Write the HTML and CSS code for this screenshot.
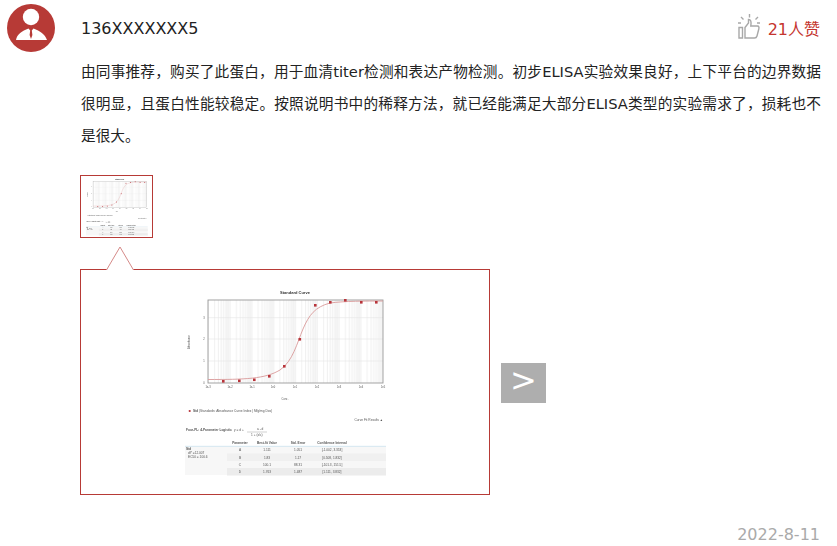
FILE: index.html
```html
<!DOCTYPE html>
<html>
<head>
    <title>136XXXXXXX5</title>
    <link rel="stylesheet" href="styles.css">
</head>
<body>
    <div class="comment">
        <svg class="avatar" viewBox="0 0 48 48" width="48" height="48">
            <circle cx="24" cy="24" r="24" fill="#b73a36"/>
            <circle cx="24" cy="13" r="8.2" fill="#fff"/>
            <path d="M9 36C10 30 15 27 21.5 24.5L23.2 26.5L22.6 31L24 35L25.4 31L24.8 26.5L26.5 24.5C33 27 38 30 40 36Z" fill="#fff"/>
        </svg>
        <div class="comment-main">
            <div class="comment-head">
                <span class="user-name">136XXXXXXX5</span>
                <span class="likes">
                    <svg class="like-icon" viewBox="0 0 24 26" width="24" height="26">
                        <g fill="none" stroke="#a8a8a8" stroke-width="1.4">
                            <path d="M12.5 0V3.5M4 3L6.5 5.5M21 3L18.5 5.5M1 9H4M20 9H23"/>
                            <path d="M8 13.5L11.5 9V5.5C13.8 5.5 14.5 7.5 13.8 12H20.5C22 12 22.2 13.5 21.8 15L20 22C19.7 23.2 19 24 17.5 24H8Z"/>
                            <path d="M2 13.5H5.5V24H2Z"/>
                        </g>
                    </svg>
                    <span class="like-count">21人赞</span>
                </span>
            </div>
            <p class="comment-text">由同事推荐，购买了此蛋白，用于血清titer检测和表达产物检测。初步ELISA实验效果良好，上下平台的边界数据很明显，且蛋白性能较稳定。按照说明书中的稀释方法，就已经能满足大部分ELISA类型的实验需求了，损耗也不是很大。</p>

            <div class="thumb">
                <svg viewBox="0 0 202 195" width="62" height="60"><use href="#curve"/></svg>
            </div>

            <div class="viewer">
                <div class="viewer-box">
                    <svg class="pointer" viewBox="0 0 29 25" width="29" height="25">
                        <path d="M0.5 24L14 1L27.5 24" fill="#fff" stroke="#d58a88"/>
                    </svg>
                    <svg class="viewer-img" viewBox="0 0 202 195" width="202" height="195">
                        <defs>
                            <pattern id="logGrid" x="23" y="0" width="21.8" height="200" patternUnits="userSpaceOnUse">
                                <path d="M.3 0V200M6.6 0V200M10.4 0V200M13.1 0V200M15.2 0V200M17 0V200M18.5 0V200M19.8 0V200M20.9 0V200" stroke="#d8d8d8" stroke-width=".4"/>
                            </pattern>
                        </defs>
                        <g id="curve">
                            <text class="t-title" x="110" y="9" text-anchor="middle">Standard Curve</text>
                            <rect x="23" y="15" width="175" height="83" fill="url(#logGrid)"/>
                            <path d="M23 32.7H198M23 54H198M23 76H198" stroke="#e4e4e4" stroke-width=".6"/>
                            <rect x="23" y="15" width="175" height="83" fill="none" stroke="#999" stroke-width=".9"/>
                            <path d="M23 94.5C60 94.5 80 94 95 85C108 76 112 58 118 44C124 30 130 22 145 18C160 16 180 16 198 16" fill="none" stroke="#d99a9a" stroke-width=".9"/>
                            <g fill="#b8343a">
                                <rect x="37" y="95" width="2.6" height="2.6"/><rect x="53" y="94.5" width="2.6" height="2.6"/>
                                <rect x="68" y="93.5" width="2.6" height="2.6"/><rect x="83" y="90" width="2.6" height="2.6"/>
                                <rect x="98" y="80" width="2.6" height="2.6"/><rect x="113.5" y="53" width="2.6" height="2.6"/>
                                <rect x="129" y="19" width="2.6" height="2.6"/><rect x="144" y="16" width="2.6" height="2.6"/>
                                <rect x="159" y="14" width="2.6" height="2.6"/><rect x="175" y="16" width="2.6" height="2.6"/>
                                <rect x="190" y="16" width="2.6" height="2.6"/>
                            </g>
                            <g class="t-tiny" text-anchor="middle">
                                <text x="19" y="34">3</text><text x="19" y="55">2</text><text x="19" y="77">1</text><text x="19" y="99">0</text>
                                <text x="23" y="103">1e-3</text><text x="45" y="103">1e-2</text><text x="67" y="103">1e-1</text>
                                <text x="88" y="103">1e0</text><text x="110" y="103">1e1</text><text x="132" y="103">1e2</text>
                                <text x="154" y="103">1e3</text><text x="176" y="103">1e4</text><text x="198" y="103">1e5</text>
                                <text x="100" y="115">Conc.</text>
                                <text transform="translate(5 57) rotate(-90)">Absorbance</text>
                            </g>
                            <circle cx="4.7" cy="126" r="1.1" fill="#b8343a"/>
                            <g class="t-small">
                                <text x="8" y="127"><tspan font-weight="bold">Std</tspan>  (Standards: Absorbance Curve Index | Mfg/mg Dos)</text>
                                <text x="198" y="136" text-anchor="end">Curve Fit Results ▲</text>
                                <text x="1" y="146" font-weight="bold">Four-PL: 4-Parameter Logistic</text>
                                <text x="49" y="146">y =   d +</text>
                                <text x="72" y="145">a - d</text>
                                <text x="66" y="151">1 + (x/c)</text>
                            </g>
                            <path d="M62 147H82" stroke="#888" stroke-width=".4"/>
                            <rect x="0" y="161" width="201" height="29" fill="#f7f7f7"/>
                            <rect x="42" y="168.5" width="159" height="7.5" fill="#f0f0f0"/>
                            <rect x="42" y="183" width="159" height="7.5" fill="#ececec"/>
                            <path d="M0 161.3H201" stroke="#bcdcec" stroke-width=".6"/>
                            <g class="t-small" text-anchor="middle">
                                <g font-weight="bold">
                                    <text x="55" y="159">Parameter</text><text x="82" y="159">Best-fit Value</text>
                                    <text x="113" y="159">Std. Error</text><text x="147" y="159">Confidence Interval</text>
                                </g>
                                <text x="55" y="166">A</text><text x="82" y="166">1.111</text><text x="113" y="166">1.051</text><text x="147" y="166">[-1.002, 3.353]</text>
                                <text x="55" y="173.5">B</text><text x="82" y="173.5">1.83</text><text x="113" y="173.5">1.17</text><text x="147" y="173.5">[0.508, 1.832]</text>
                                <text x="55" y="181">C</text><text x="82" y="181">100.1</text><text x="113" y="181">88.31</text><text x="147" y="181">[-101.3, 151.5]</text>
                                <text x="55" y="188">D</text><text x="82" y="188">1.763</text><text x="113" y="188">1.487</text><text x="147" y="188">[1.111, 3.832]</text>
                            </g>
                            <g class="t-small">
                                <text x="1" y="165" font-weight="bold">Std</text>
                                <text x="3" y="169">df* =12.007</text>
                                <text x="3" y="173">EC50 = 100.6</text>
                            </g>
                        </g>
                    </svg>
                </div>
                <div class="next-btn">&gt;</div>
            </div>

            <div class="comment-date">2022-8-11</div>
        </div>
    </div>
</body>
</html>
```

FILE: styles.css
```css
body { margin: 0; font-family: "DejaVu Sans", "Noto Sans CJK SC", sans-serif; color: #222; background: #fff; }
.comment { display: flex; gap: 26px; padding: 4px 16px 0 7px; }
.avatar { flex: none; }
.comment-main { width: 740px; }
.comment-head { display: flex; justify-content: space-between; align-items: center; height: 48px; font-size: 16px; }
.likes { display: flex; align-items: center; gap: 7px; margin-right: 1px; }
.like-icon { display: block; margin-top: -2px; }
.like-count { color: #c5352f; }
.comment-text { margin: 4px 0 0; font-size: 14.67px; line-height: 32px; text-align: justify; }
.thumb { display: flex; justify-content: center; align-items: center; box-sizing: border-box; width: 73px; height: 63px; margin: 23px 0 0 -1px; border: 1px solid #b73a36; }
.thumb svg { filter: blur(.5px); }
.viewer { display: flex; align-items: center; gap: 11px; margin: 31px 0 0 -1px; }
.viewer-box { position: relative; display: flex; box-sizing: border-box; width: 410px; height: 226px; padding: 15px 0 0 104px; border: 1px solid #b73a36; }
.viewer-img { display: block; filter: blur(.6px); }
.pointer { position: absolute; left: 25px; top: -24px; }
.next-btn { width: 45px; height: 40px; margin-top: 2px; background: #aeaeae; color: #fff; font-size: 32px; line-height: 35px; text-align: center; }
.comment-date { margin-top: 28px; font-size: 16px; line-height: 24px; text-align: right; color: #aaa; padding-right: 1px; }
.t-title { font: bold 4px "Liberation Sans", sans-serif; fill: #333; }
.t-tiny { font: 2.6px "Liberation Sans", sans-serif; fill: #555; }
.t-small { font: 3.2px "Liberation Sans", sans-serif; fill: #555; }
```
